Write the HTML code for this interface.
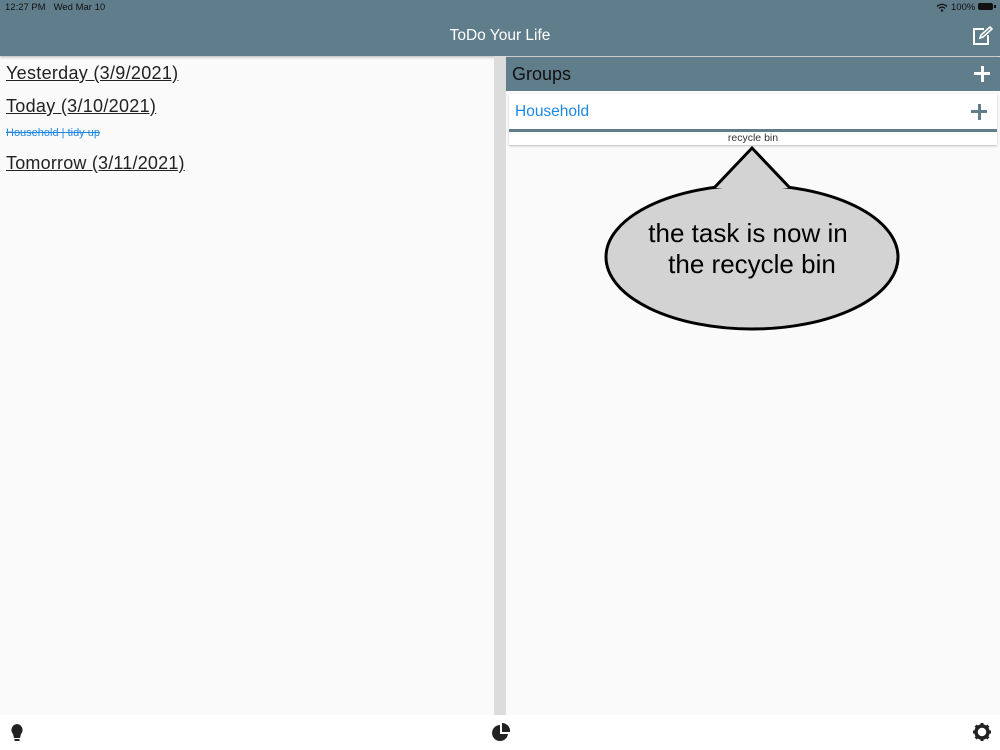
<!DOCTYPE html>
<html><head><style>
body{margin:0;width:1000px;height:750px;position:relative;overflow:hidden;font-family:"Liberation Sans",sans-serif;background:#fafafa}
.a{position:absolute}
</style></head><body>
<div class="a" style="left:0;top:0;width:1000px;height:56px;background:#607d8b;box-shadow:0 1px 3px rgba(0,0,0,.3)"></div>
<div class="a" style="left:5px;top:2px;font-size:9.5px;color:#111">12:27 PM&nbsp;&nbsp;&nbsp;Wed Mar 10</div>
<div class="a" style="left:951px;top:2px;font-size:9.5px;color:#111">100%</div>
<svg class="a" style="left:936px;top:3px" width="12" height="9" viewBox="0 0 12 9"><path d="M1 3.5a7 7 0 0 1 10 0M3 5.5a4 4 0 0 1 6 0" stroke="#111" stroke-width="1.3" fill="none"/><circle cx="6" cy="7.5" r="1.2" fill="#111"/></svg>
<div class="a" style="left:978px;top:3px;width:15px;height:7px;background:#111;border-radius:2px"></div>
<div class="a" style="left:994px;top:5px;width:1.5px;height:3px;background:#111"></div>
<div class="a" style="left:0;top:27px;width:1000px;text-align:center;color:#fff;font-size:15.5px">ToDo Your Life</div>
<svg class="a" style="left:972px;top:26px" width="22" height="20" viewBox="0 0 22 20"><path d="M12 3H2v15h14V9" stroke="#fff" stroke-width="2" fill="none"/><path d="M8 12l1-3 9-8 2 2-9 8z" stroke="#fff" stroke-width="1.6" fill="none"/></svg>
<div class="a" style="left:494px;top:56px;width:12px;height:659px;background:#dcdcdc"></div>
<div class="a" style="left:6px;top:63px;font-size:18px;letter-spacing:0.3px;color:#222;text-decoration:underline">Yesterday (3/9/2021)</div>
<div class="a" style="left:6px;top:96px;font-size:18px;letter-spacing:0.3px;color:#222;text-decoration:underline">Today (3/10/2021)</div>
<div class="a" style="left:6px;top:127px;font-size:11px;color:#1e88e5;text-decoration:line-through">Household | tidy up</div>
<div class="a" style="left:6px;top:153px;font-size:18px;letter-spacing:0.2px;color:#222;text-decoration:underline">Tomorrow (3/11/2021)</div>
<div class="a" style="left:506px;top:57px;width:494px;height:34px;background:#607d8b"></div>
<div class="a" style="left:512px;top:64px;font-size:18px;color:#111">Groups</div>
<div class="a" style="left:974px;top:72px;width:16px;height:3px;background:#fff"></div>
<div class="a" style="left:980.5px;top:66px;width:3px;height:16px;background:#fff"></div>
<div class="a" style="left:509px;top:94px;width:488px;height:51px;background:#fff;box-shadow:0 1px 2px rgba(0,0,0,.25)"></div>
<div class="a" style="left:515px;top:103px;font-size:15.5px;color:#1e88e5">Household</div>
<div class="a" style="left:971px;top:110px;width:16px;height:3px;background:#607d8b"></div>
<div class="a" style="left:977.5px;top:104px;width:3px;height:16px;background:#607d8b"></div>
<div class="a" style="left:509px;top:129px;width:488px;height:3px;background:#607d8b"></div>
<div class="a" style="left:509px;top:132px;width:488px;text-align:center;font-size:10.5px;color:#333">recycle bin</div>
<svg class="a" style="left:600px;top:140px" width="305" height="195" viewBox="600 140 305 195">
<ellipse cx="752" cy="257" rx="146" ry="72" fill="#d3d3d3" stroke="#000" stroke-width="3"/>
<path d="M714 188L752 148L790 188" fill="#d3d3d3" stroke="#000" stroke-width="3" stroke-linejoin="miter"/>
<text x="748" y="242" font-size="26" text-anchor="middle" font-family="Liberation Sans">the task is now in</text>
<text x="752" y="273" font-size="26" text-anchor="middle" font-family="Liberation Sans">the recycle bin</text>
</svg>
<div class="a" style="left:0;top:715px;width:1000px;height:35px;background:#fff"></div>
<svg class="a" style="left:10px;top:723px" width="14" height="20" viewBox="0 0 14 20"><path d="M7 1a6 6 0 0 0-4 10l1 4h6l1-4A6 6 0 0 0 7 1z" fill="#222"/><rect x="4.5" y="16" width="5" height="2" fill="#222"/></svg>
<svg class="a" style="left:491px;top:723px" width="20" height="20" viewBox="0 0 20 20"><path d="M9 2a8 8 0 1 0 8 9H9z" fill="#222"/><path d="M11 0v9h8a8 8 0 0 0-8-9z" fill="#222"/></svg>
<svg class="a" style="left:973px;top:723px" width="18" height="18" viewBox="0 0 18 18"><circle cx="9" cy="9" r="6" fill="none" stroke="#222" stroke-width="3.5"/><g stroke="#222" stroke-width="3"><path d="M9 0v4M9 14v4M0 9h4M14 9h4M2.6 2.6l3 3M12.4 12.4l3 3M2.6 15.4l3-3M12.4 5.6l3-3"/></g></svg>
</body></html>
